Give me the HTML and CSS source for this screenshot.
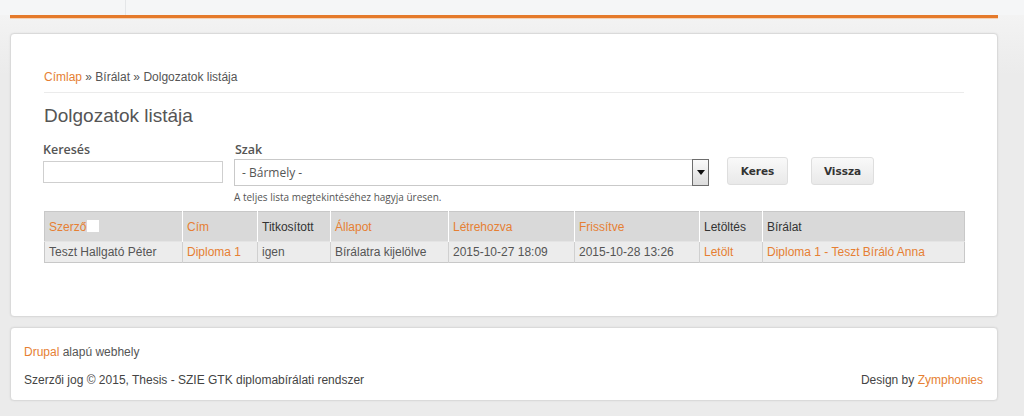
FILE: index.html
```html
<!DOCTYPE html>
<html lang="hu">
<head>
<meta charset="utf-8">
<title>Dolgozatok listája</title>
<link rel="stylesheet" href="styles.css">
</head>
<body>
<header class="topbar">
  <div class="logo-area"></div>
</header>
<div class="page">
  <div class="accent"></div>
  <main class="card">
    <nav class="breadcrumb"><a href="#">Címlap</a> » Bírálat » Dolgozatok listája</nav>
    <h1 class="title">Dolgozatok listája</h1>
    <form class="filters">
      <div class="field field-search">
        <label class="label">Keresés</label>
        <input class="text-input" type="text">
      </div>
      <div class="field field-select">
        <label class="label">Szak</label>
        <div class="select">
          <span class="select-value">- Bármely -</span>
          <span class="select-arrow"><svg width="8" height="5" viewBox="0 0 8 5"><path d="M0 0h8L4 5z" fill="#111"/></svg></span>
        </div>
        <div class="description">A teljes lista megtekintéséhez hagyja üresen.</div>
      </div>
      <button class="btn btn-keres" type="button">Keres</button>
      <button class="btn btn-vissza" type="button">Vissza</button>
    </form>
    <table class="list">
      <colgroup>
        <col class="c1"><col class="c2"><col class="c3"><col class="c4"><col class="c5"><col class="c6"><col class="c7"><col class="c8">
      </colgroup>
      <thead>
        <tr>
          <th><a href="#">Szerző</a><span class="check"></span></th>
          <th><a href="#">Cím</a></th>
          <th class="plain">Titkosított</th>
          <th><a href="#">Állapot</a></th>
          <th><a href="#">Létrehozva</a></th>
          <th><a href="#">Frissítve</a></th>
          <th class="plain">Letöltés</th>
          <th class="plain">Bírálat</th>
        </tr>
      </thead>
      <tbody>
        <tr>
          <td>Teszt Hallgató Péter</td>
          <td><a href="#">Diploma 1</a></td>
          <td>igen</td>
          <td>Bírálatra kijelölve</td>
          <td>2015-10-27 18:09</td>
          <td>2015-10-28 13:26</td>
          <td><a href="#">Letölt</a></td>
          <td><a href="#">Diploma 1 - Teszt Bíráló Anna</a></td>
        </tr>
      </tbody>
    </table>
  </main>
  <footer class="footer">
    <div class="footer-line"><a href="#">Drupal</a> alapú webhely</div>
    <div class="footer-bottom">
      <span>Szerzői jog © 2015, Thesis - SZIE GTK diplomabírálati rendszer</span>
      <span>Design by <a href="#">Zymphonies</a></span>
    </div>
  </footer>
</div>
</body>
</html>
```

FILE: styles.css
```css
* { box-sizing: border-box; }
html, body { margin: 0; padding: 0; }
body {
  background: #ebebeb;
  font-family: "Liberation Sans", Arial, sans-serif;
  font-size: 12px;
  color: #555;
  height: 416px;
  overflow: hidden;
}
a { color: #e67f33; text-decoration: none; }

.topbar {
  height: 15px;
  background: #f5f6f7;
  display: flex;
}
.logo-area {
  width: 126px;
  border-right: 1px solid #e4e6e8;
}
.page {
  padding: 0 26px 0 10px;
  background: linear-gradient(#f3f3f3, #ebebeb 60px);
}
.accent {
  height: 3px;
  background: #e57a2b;
  box-shadow: 0 1px 0 #f5d2b6;
}
.card {
  margin-top: 15px;
  height: 284px;
  background: #fff;
  border: 1px solid #dadada;
  border-radius: 4px;
  box-shadow: 0 0 2px rgba(0,0,0,0.08);
  padding: 34px 33px 0 33px;
}
.breadcrumb {
  line-height: 18px;
  padding-bottom: 6px;
  border-bottom: 1px solid #ebebeb;
}
.title {
  margin: 11px 0 0 0;
  font-size: 19px;
  font-weight: normal;
  line-height: 24px;
  color: #555;
}
.filters {
  display: flex;
  align-items: flex-start;
  margin-top: 14px;
  height: 64px;
}
.label {
  display: block;
  font-family: "Open Sans", sans-serif;
  font-weight: 600;
  font-size: 12.5px;
  line-height: 16px;
  color: #555;
}
.field-search { width: 180px; margin-left: -1px; }
.text-input {
  display: block;
  margin-top: 3px;
  width: 180px;
  height: 22px;
  border: 1px solid #cfcfcf;
  background: #fff;
  padding: 0;
}
.field-select { margin-left: 11px; }
.field-select .label { margin-left: 1px; }
.select {
  margin-top: 1px;
  width: 475px;
  height: 27px;
  border: 1px solid #c9c9c9;
  display: flex;
  align-items: stretch;
}
.select-value {
  flex: 1;
  font-family: "Open Sans", sans-serif;
  font-size: 12px;
  line-height: 25px;
  padding-left: 7px;
  color: #555;
}
.select-arrow {
  width: 17px;
  margin: -1px -1px -1px 0;
  border: 1px solid #6d6d6d;
  background: linear-gradient(#fafafa, #dcdcdc);
  display: flex;
  align-items: center;
  justify-content: center;
}
.description {
  font-family: "Open Sans", sans-serif;
  font-size: 10px;
  line-height: 14px;
  margin-top: 4px;
  color: #555;
}
.btn {
  margin-top: 15px;
  height: 28px;
  border: 1px solid #dedede;
  border-radius: 3px;
  background: linear-gradient(#f9f9f9, #e9e9e9);
  font-family: "DejaVu Sans", Verdana, sans-serif;
  font-weight: bold;
  font-size: 10.5px;
  color: #333;
  padding: 0;
}
.btn-keres { margin-left: 18px; width: 61px; }
.btn-vissza { margin-left: 23px; width: 63px; }

.list {
  margin-top: 5px;
  width: 920px;
  border-collapse: collapse;
  table-layout: fixed;
  border: 1px solid #c8c8c8;
}
.c1 { width: 138px; } .c2 { width: 75px; } .c3 { width: 73px; } .c4 { width: 118px; }
.c5 { width: 126px; } .c6 { width: 125px; } .c7 { width: 63px; } .c8 { width: 202px; }
.list th {
  background: #d9d9d9;
  text-align: left;
  font-weight: normal;
  height: 30px;
  padding: 0 4px;
  border-left: 1px solid #fff;
  white-space: nowrap;
}
.list th:first-child { border-left: 0; }
.list th.plain { color: #333; }
.list td {
  background: #ececec;
  height: 21px;
  padding: 0 4px;
  border-left: 1px solid #d0d0d0;
  border-top: 1px solid #e4e4e4;
  white-space: nowrap;
}
.list td:first-child { border-left: 0; }
.check {
  display: inline-block;
  width: 12px;
  height: 12px;
  background: #fff;
  vertical-align: -1px;
  margin-left: 1px;
}

.footer {
  margin-top: 10px;
  height: 74px;
  background: #fff;
  border: 1px solid #dadada;
  border-radius: 4px;
  box-shadow: 0 0 2px rgba(0,0,0,0.08);
  padding: 16px 14px 0 13px;
  line-height: 16px;
}
.footer-bottom {
  margin-top: 12px;
  display: flex;
  justify-content: space-between;
  color: #444;
}
```
